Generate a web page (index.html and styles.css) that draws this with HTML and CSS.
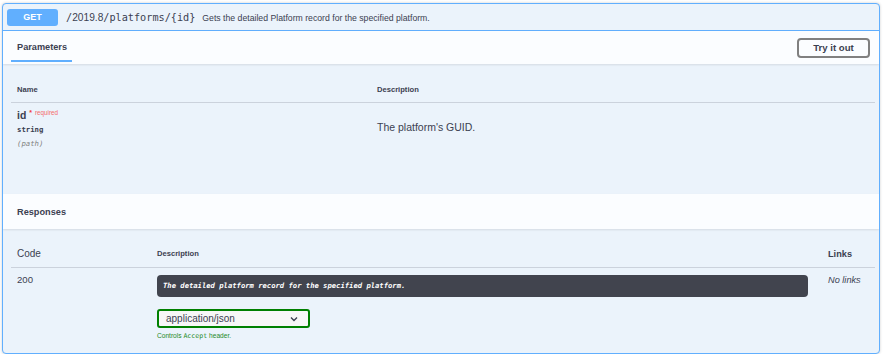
FILE: index.html
```html
<!DOCTYPE html>
<html>

<head>
  <meta charset="UTF-8">
  <title>GET /2019.8/platforms/{id}</title>
  <link rel="stylesheet" href="styles.css">
</head>

<body>
  <div class="opblock">
    <div class="summary">
      <span class="method">GET</span>
      <span class="path"><span class="mono">/</span>2019.8<span class="mono">/platforms/{id}</span></span>
      <span class="summary-desc">Gets the detailed Platform record for the specified platform.</span>
    </div>

    <div class="section-header">
      <div class="tab">Parameters</div>
      <button class="try-out">Try it out</button>
    </div>

    <div class="params">
      <table class="params-table">
        <thead>
          <tr>
            <th class="col-name">Name</th>
            <th>Description</th>
          </tr>
        </thead>
        <tbody>
          <tr>
            <td class="col-name">
              <div class="param-name">id<span class="star">*</span><span class="required">required</span></div>
              <div class="param-type">string</div>
              <div class="param-in">(path)</div>
            </td>
            <td class="param-desc">The platform's GUID.</td>
          </tr>
        </tbody>
      </table>
    </div>

    <div class="section-header resp-header">
      <div class="section-title">Responses</div>
    </div>

    <div class="responses">
      <table class="resp-table">
        <thead>
          <tr>
            <th class="col-code">Code</th>
            <th class="col-desc small-head">Description</th>
            <th class="col-links">Links</th>
          </tr>
        </thead>
        <tbody>
          <tr>
            <td class="col-code code">200</td>
            <td class="col-desc">
              <div class="markdown">The detailed platform record for the specified platform.</div>
              <div class="media-select">
                <span>application/json</span>
                <svg width="8" height="6" viewBox="0 0 8 6"><path d="M1 1.5l3 3 3-3" fill="none" stroke="#3b4151" stroke-width="1.4"/></svg>
              </div>
              <div class="accept-msg">Controls <span class="mono">Accept</span> header.</div>
            </td>
            <td class="col-links no-links">No links</td>
          </tr>
        </tbody>
      </table>
    </div>
  </div>
</body>

</html>
```

FILE: styles.css
```css
body {
  background: #fff;
  color: #3b4151;
  font-family: "Liberation Sans", Arial, sans-serif;
  margin: 0;
  padding: 3px 4px 0 2px;
}

.mono {
  font-family: "DejaVu Sans Mono", monospace;
}

.opblock {
  background: #ebf3fb;
  border: 1px solid #61affe;
  border-radius: 4px;
  box-shadow: 0 0 3px rgba(0, 0, 0, .19);
  height: 349px;
  overflow: hidden;
}

.summary {
  align-items: center;
  border-bottom: 1px solid #61affe;
  display: flex;
  padding: 5px 4px 4px;
}

.method {
  background: #61affe;
  border-radius: 3px;
  color: #fff;
  font-size: 9px;
  font-weight: bold;
  line-height: 17px;
  text-align: center;
  width: 51px;
}

.path {
  font-size: 10.2px;
  margin-left: 8px;
}

.summary-desc {
  font-size: 8.7px;
  margin-left: 7px;
}

.section-header {
  align-items: center;
  background: #fbfdff;
  box-shadow: 0 1px 2px rgba(0, 0, 0, .1);
  display: flex;
  height: 33px;
  justify-content: space-between;
  padding: 0 9px 0 8px;
  position: relative;
}

.tab {
  align-self: flex-start;
  border-bottom: 2px solid #61affe;
  box-sizing: border-box;
  font-size: 9.2px;
  font-weight: bold;
  height: 31px;
  line-height: 26px;
  padding: 3px 5px 0 6px;
}

.try-out {
  background: transparent;
  border: 2px solid #808080;
  border-radius: 4px;
  color: #3b4151;
  font-family: "Liberation Sans", Arial, sans-serif;
  font-size: 9.6px;
  font-weight: bold;
  height: 20px;
  padding: 0;
  width: 73px;
}

.params {
  height: 108px;
  padding: 21px 4px 0 8px;
}

table {
  border-collapse: collapse;
  table-layout: fixed;
  width: 100%;
}

th {
  border-bottom: 1px solid #cbd2dc;
  font-size: 7.6px;
  font-weight: bold;
  line-height: 10px;
  padding: 0 0 7px;
  text-align: left;
}

td {
  padding: 0;
  vertical-align: top;
}

.params-table .col-name {
  padding-left: 6px;
  width: 360px;
}

.params-table td.col-name {
  padding-top: 7px;
}

.param-name {
  font-size: 10.4px;
  font-weight: bold;
  line-height: 12px;
}

.star {
  color: #f03d3d;
  font-size: 7px;
  margin-left: 3px;
  position: relative;
  top: -4px;
}

.required {
  color: #f56a6a;
  font-size: 6.3px;
  font-weight: normal;
  margin-left: 3px;
  position: relative;
  top: -4px;
}

.param-type {
  font-family: "DejaVu Sans Mono", monospace;
  font-size: 7.3px;
  font-weight: bold;
  line-height: 14px;
}

.param-in {
  color: #808080;
  font-family: "DejaVu Sans Mono", monospace;
  font-size: 7.3px;
  font-style: italic;
  line-height: 14px;
}

.param-desc {
  font-size: 10.5px;
  line-height: 14px;
  padding-top: 17px;
}

.resp-header {
  justify-content: flex-start;
  height: 35px;
  margin-top: 1px;
}

.section-title {
  font-size: 9.2px;
  font-weight: bold;
  padding-left: 6px;
}

.responses {
  padding: 19px 4px 0 8px;
}

.resp-table th {
  line-height: 12px;
}

.resp-table .col-code {
  padding-left: 6px;
  width: 140px;
}

.resp-table th.col-code {
  font-size: 10px;
  font-weight: normal;
}

.resp-table .col-desc {
  padding-right: 20px;
  width: 651px;
}

.resp-table .col-links {
  font-size: 9.2px;
}

.small-head {
  font-size: 7.6px;
}

.code {
  font-size: 9.6px;
  line-height: 12px;
  padding-top: 6px;
}

.markdown {
  background: #41444e;
  border-radius: 4px;
  color: #fff;
  font-family: "DejaVu Sans Mono", monospace;
  font-size: 7.2px;
  font-style: italic;
  font-weight: bold;
  line-height: 10px;
  margin-top: 7px;
  padding: 6px 6px;
}

.media-select {
  align-items: center;
  background: #f7f7f7;
  border: 2px solid #008000;
  border-radius: 3px;
  box-sizing: border-box;
  display: flex;
  font-size: 10px;
  height: 19px;
  justify-content: space-between;
  margin-top: 12px;
  padding: 0 10px 0 7px;
  width: 153px;
}

.accept-msg {
  color: #1f8a1f;
  font-size: 6.6px;
  line-height: 9px;
  margin-top: 3px;
}

.no-links {
  font-style: italic;
  line-height: 12px;
  padding-top: 6px;
}
```
